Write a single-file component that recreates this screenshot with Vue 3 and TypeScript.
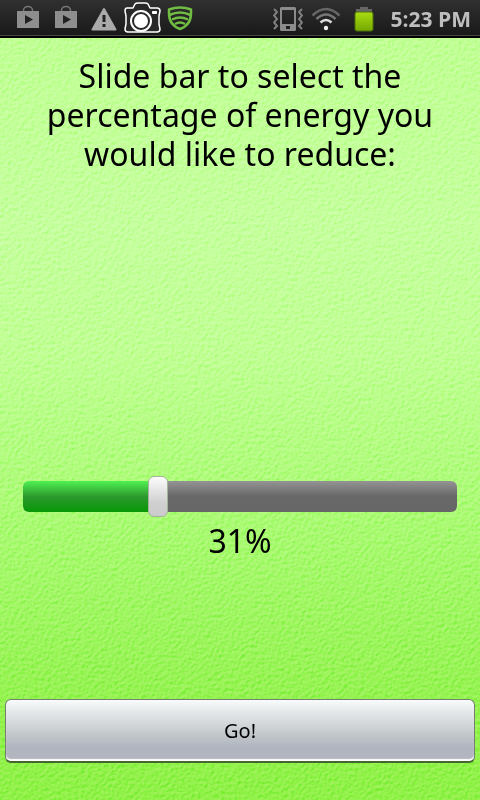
<script setup lang="ts">
import { computed, ref } from 'vue'

const percent = ref(31)
const fillStyle = computed(() => ({ backgroundSize: `${percent.value}% 100%, 100% 100%` }))
</script>

<template>
  <div class="screen">
    <svg class="texture" aria-hidden="true">
      <filter id="paper" x="0" y="0" width="100%" height="100%" color-interpolation-filters="sRGB">
        <feTurbulence type="fractalNoise" baseFrequency="0.3" numOctaves="3" seed="7" />
        <feColorMatrix type="matrix" values="0 0 0 0 0  0 0 0 0 0  0 0 0 0 0  1 0 0 0 0" />
        <feDiffuseLighting surfaceScale="1.8" diffuseConstant="0.8" lighting-color="#fff">
          <feDistantLight azimuth="235" elevation="45" />
        </feDiffuseLighting>
      </filter>
      <rect width="100%" height="100%" filter="url(#paper)" />
    </svg>

    <header class="status">
      <div class="group notices">
        <svg v-for="n in 2" :key="n" class="shop" width="22" height="24" viewBox="0 0 22 24" aria-hidden="true">
          <path d="M6.500 7V5.500a4.500 4 0 0 1 9 0V7" fill="none" stroke="#777" stroke-width="1.500" />
          <path d="M0 6h22v17H0z" fill="#8e8e8e" />
          <path d="M8 10v9l8-4.500z" fill="#222" />
        </svg>
        <svg class="warning" width="26" height="24" viewBox="0 0 26 24" aria-hidden="true">
          <path d="M13 2 24.500 22.500h-23z" fill="#aaa" stroke="#aaa" stroke-width="2" stroke-linejoin="round" />
          <path d="M11.500 8h3v7h-3zM11.500 17h3v3h-3z" fill="#222" />
        </svg>
        <svg class="camera" width="38" height="33" viewBox="0 0 38 33" aria-hidden="true">
          <path d="M3 6h6l2-4q1-1 3-1h7q2 0 3 1l2 4h7q3 0 3 3l-1 5v8l1 5q0 3-3 3H4q-3 0-3-3l1-5v-8L1 9q0-3 2-3z" fill="#292929" stroke="#fff" stroke-width="1.500" stroke-linejoin="round" />
          <circle cx="17" cy="19" r="10" fill="#292929" stroke="#fff" stroke-width="2" />
          <circle cx="17" cy="19" r="7" fill="#fff" />
          <path d="M28.500 9.500h4v2h-4z" fill="#fff" stroke="#fff" />
        </svg>
        <svg class="shield" width="26" height="26" viewBox="0 0 26 26" aria-hidden="true">
          <g fill="none" stroke="#70bd43" stroke-width="2.500" stroke-linejoin="round">
            <path d="M2 4.500Q13 .5 24 4.500v4Q24 20 13 24 2 20 2 8.500z" />
            <path d="M2.500 10q10.500-5 21 0M5 14.500q8-4 16 0M8 19q5-3 10 0" />
          </g>
        </svg>
      </div>
      <div class="group system">
        <svg width="30" height="24" viewBox="0 0 30 24" aria-hidden="true">
          <path d="M8 0h14l1 1v22l-1 1H8l-1-1V1zM9 3v14h12V3zM13 19v3h4v-3z" fill="#8b8b8b" fill-rule="evenodd" />
          <path d="M1 2l3 3-3 3.500 3 3.500-3 3.500 3 3.500-3 3M29 2l-3 3 3 3.500-3 3.500 3 3.500-3 3.500 3 3" fill="none" stroke="#808080" stroke-width="2" />
        </svg>
        <svg class="wifi" width="30" height="24" viewBox="0 0 30 24" aria-hidden="true">
          <g fill="none" stroke-width="2.500">
            <path d="M1.500 8.500q13.500-13 27 0" stroke="#666" />
            <path d="M5.500 12q9.500-9 19 0" stroke="#777" />
            <path d="M9.500 15.500q5.500-5 11 0" stroke="#ddd" />
          </g>
          <circle cx="15" cy="21" r="2.200" fill="#eee" />
        </svg>
        <svg class="battery" width="20" height="26" viewBox="0 0 20 26" aria-hidden="true">
          <defs>
            <linearGradient id="charge" x2="0" y2="1">
              <stop stop-color="#a9dc13" />
              <stop offset="1" stop-color="#73a800" />
            </linearGradient>
          </defs>
          <path d="M2 3h4V1h8v2h4v4H2z" fill="#666" />
          <rect x="1" y="6" width="18" height="19" rx="2" fill="url(#charge)" stroke="#4f7308" />
        </svg>
        <time class="clock">5:23 PM</time>
      </div>
    </header>

    <main class="content">
      <label class="prompt" for="reduction">Slide bar to select the percentage of energy you would like to reduce:</label>
      <div class="track" :style="fillStyle">
        <input id="reduction" v-model.number="percent" class="range" type="range" min="0" max="100" />
      </div>
      <output class="value" for="reduction">{{ percent }}%</output>
      <button class="go" type="button">Go!</button>
    </main>
  </div>
</template>

<style>
body {
  margin: 0;
}
</style>

<style scoped>
.screen {
  position: relative;
  isolation: isolate;
  display: flex;
  flex-direction: column;
  min-height: 100vh;
  background: linear-gradient(#bfff92 5%, #c4ff9c 28%, #bfff92 44%, #a8fa70 65%, #92f24c 88%, #8df143);
  color: #000;
  font-family: "Noto Sans", "Open Sans", sans-serif;
}

.texture {
  position: absolute;
  inset: 0;
  z-index: -1;
  width: 100%;
  height: 100%;
  mix-blend-mode: soft-light;
  opacity: 0.7;
}

.status {
  box-sizing: border-box;
  display: flex;
  justify-content: space-between;
  height: 38px;
  padding: 0 9px 0 17px;
  border-bottom: 1px solid #000;
  background: linear-gradient(#303030, #191919 35px, #484848 35px, #484848 36px, #000 36px);
}

.group {
  display: flex;
  align-items: center;
}

.shop {
  margin: 0 16px 4px 0;
}

.warning {
  margin-left: -2px;
}

.camera {
  margin-left: 7px;
}

.shield {
  margin: 0 0 2px 5px;
}

.wifi {
  margin-left: 8px;
}

.battery {
  margin-left: 13px;
}

.clock {
  margin-left: 17px;
  color: #bebebe;
  font-family: "Open Sans", "Noto Sans", sans-serif;
  font-size: 21px;
  font-weight: 700;
  line-height: 36px;
}

.content {
  flex: 1;
  display: flex;
  flex-direction: column;
  padding: 18px 5px 37px;
}

.prompt {
  padding: 0 36px;
  font-size: 32px;
  line-height: 39px;
  text-align: center;
}

.track {
  display: flex;
  height: 31px;
  margin: auto 18px 0;
  border-radius: 6px;
  background-image:
    linear-gradient(#4ff152, #2d992d 50%, #079807),
    linear-gradient(#949494, #686868 50%, #666);
  background-repeat: no-repeat;
}

.range {
  flex: 1;
  min-width: 0;
  height: 41px;
  margin: -5px -10px;
  appearance: none;
  background: transparent;
  cursor: pointer;
}

.range::-webkit-slider-thumb {
  box-sizing: border-box;
  width: 20px;
  height: 41px;
  appearance: none;
  border: 1px solid #a5b39c;
  border-radius: 6px;
  background: linear-gradient(#fcfcfc, #d0d0d0 65%, #cbcbcb);
}

.value {
  margin-top: 9px;
  font-size: 32px;
  line-height: 39px;
  text-align: center;
}

.go {
  height: 64px;
  margin-top: 139px;
  padding: 0;
  border: 1px solid #718071;
  border-bottom: 2px solid #43672f;
  border-radius: 6px;
  background: linear-gradient(#f8fafb, #c4c9cc 55%, #b0b4bf 78%, #b4b7bf);
  box-shadow: inset 0 -2px 1px #fff;
  color: #000;
  font-family: inherit;
  font-size: 20px;
  line-height: 30px;
  cursor: pointer;
}
</style>
